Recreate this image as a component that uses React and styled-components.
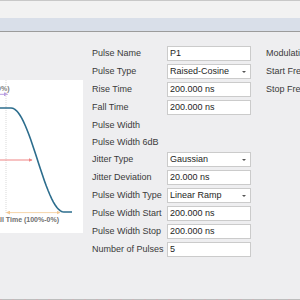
import React from "react";
import styled, { createGlobalStyle } from "styled-components";

const Global = createGlobalStyle`
  html, body { margin: 0; padding: 0; }
  body {
    width: 300px; height: 300px; overflow: hidden;
    background: #eeeef0;
    font-family: "Liberation Sans", Arial, sans-serif;
  }
`;

const Page = styled.div`
  width: 300px; height: 300px;
  display: flex; flex-direction: column;
  overflow: hidden;
`;

const TitleStrip = styled.div`
  height: 17px;
  border-top: 1px solid #c8c8c8;
  background: #f2f2f2;
`;

const TabBar = styled.div`
  height: 13px;
  background: #d9dfe9;
  border-bottom: 1px solid #9c9c9c;
`;

const Content = styled.div`
  flex: 1;
  display: flex;
  align-items: flex-start;
  background: #eeeef0;
  overflow: hidden;
`;

const BottomEdge = styled.div`
  height: 1px;
  background: repeating-linear-gradient(90deg, #c9b4b8 0 2px, #bdbdbd 2px 12px);
`;

const ChartPanel = styled.div`
  flex: none;
  width: 83px; height: 153px;
  margin-top: 48px;
  background: #ffffff;
  overflow: hidden;
  svg { display: block; }
`;

const Form = styled.div`
  flex: none;
  margin-left: 9px;
  margin-top: 12px;
  display: flex; flex-direction: column;
`;

const Row = styled.div`
  display: grid;
  grid-template-columns: 75px 84px auto;
  align-items: center;
  height: ${(p) => (p.$compact ? "17px" : "18px")};
`;

const Label = styled.span`
  font-size: 9px;
  color: #3a3a3a;
  white-space: nowrap;
`;

const SideLabel = styled(Label)`
  padding-left: 15px;
`;

const Field = styled.div`
  box-sizing: border-box;
  position: relative;
  width: 84px; height: 15px;
  border: 1px solid #cbcbcb;
  background: #ffffff;
  padding-left: 2px;
  display: flex; align-items: center;
  font-size: 9px;
  color: #1e1e1e;
  white-space: nowrap;
`;

const Caret = styled.span`
  position: absolute;
  right: 4px; top: 6px;
  width: 0; height: 0;
  border-left: 2.5px solid transparent;
  border-right: 2.5px solid transparent;
  border-top: 2.5px solid #555;
`;

function Chart() {
  const pts = [];
  pts.push([-5, 28], [11, 28]);
  for (let i = 1; i <= 30; i++) {
    const t = i / 30;
    const x = 11 + 53 * t;
    const y = 28 + 104 * (1 - Math.cos(Math.PI * t)) / 2;
    pts.push([x, y]);
  }
  pts.push([72, 132]);
  const d = pts.map((p) => p[0].toFixed(2) + "," + p[1].toFixed(2)).join(" ");
  return (
    <svg width="83" height="153" viewBox="0 0 83 153">
      <defs>
        <marker id="ahR" markerWidth="4" markerHeight="4" refX="3.5" refY="2" orient="auto">
          <path d="M0,0 L4,2 L0,4 Z" fill="#ef8585" />
        </marker>
        <marker id="ahP" markerWidth="4" markerHeight="4" refX="3.5" refY="2" orient="auto">
          <path d="M0,0 L4,2 L0,4 Z" fill="#b79be0" />
        </marker>
        <marker id="ahO" markerWidth="4" markerHeight="4" refX="3.5" refY="2" orient="auto-start-reverse">
          <path d="M0,0 L4,2 L0,4 Z" fill="#f2c792" />
        </marker>
      </defs>
      <text x="9.5" y="11" textAnchor="end" fontSize="7" fontWeight="bold" fill="#7a7a7a" fontFamily="Liberation Sans, Arial, sans-serif">Rise Time (0%-100%)</text>
      <line x1="-2" y1="14.3" x2="7.5" y2="14.3" stroke="#b79be0" strokeWidth="1" markerEnd="url(#ahP)" />
      <line x1="6" y1="0" x2="6" y2="134" stroke="#cfcfcf" strokeWidth="0.8" strokeDasharray="1 1" />
      <line x1="-2" y1="80" x2="32" y2="80" stroke="#ef8585" strokeWidth="1" markerEnd="url(#ahR)" />
      <line x1="6.5" y1="132.6" x2="60" y2="132.6" stroke="#f5d5aa" strokeWidth="1" markerStart="url(#ahO)" markerEnd="url(#ahO)" />
      <polyline points={d} fill="none" stroke="#2c6d8d" strokeWidth="1.6" strokeLinejoin="round" />
      <text x="59" y="141.5" textAnchor="end" fontSize="7" fontWeight="bold" fill="#6f6f6f" fontFamily="Liberation Sans, Arial, sans-serif">Fall Time (100%-0%)</text>
    </svg>
  );
}

const rows = [
  { label: "Pulse Name", value: "P1", side: "Modulation Type" },
  { label: "Pulse Type", value: "Raised-Cosine", select: true, side: "Start Frequency" },
  { label: "Rise Time", value: "200.000 ns", side: "Stop Frequency" },
  { label: "Fall Time", value: "200.000 ns" },
  { label: "Pulse Width", compact: true },
  { label: "Pulse Width 6dB", compact: true },
  { label: "Jitter Type", value: "Gaussian", select: true },
  { label: "Jitter Deviation", value: "20.000 ns" },
  { label: "Pulse Width Type", value: "Linear Ramp", select: true },
  { label: "Pulse Width Start", value: "200.000 ns" },
  { label: "Pulse Width Stop", value: "200.000 ns" },
  { label: "Number of Pulses", value: "5" },
];

export default function App() {
  return (
    <Page>
      <Global />
      <TitleStrip />
      <TabBar />
      <Content>
        <ChartPanel>
          <Chart />
        </ChartPanel>
        <Form>
          {rows.map((r) => (
            <Row key={r.label} $compact={r.compact}>
              <Label>{r.label}</Label>
              {r.value !== undefined ? (
                <Field>
                  {r.value}
                  {r.select && <Caret />}
                </Field>
              ) : (
                <span />
              )}
              {r.side && <SideLabel>{r.side}</SideLabel>}
            </Row>
          ))}
        </Form>
      </Content>
      <BottomEdge />
    </Page>
  );
}
